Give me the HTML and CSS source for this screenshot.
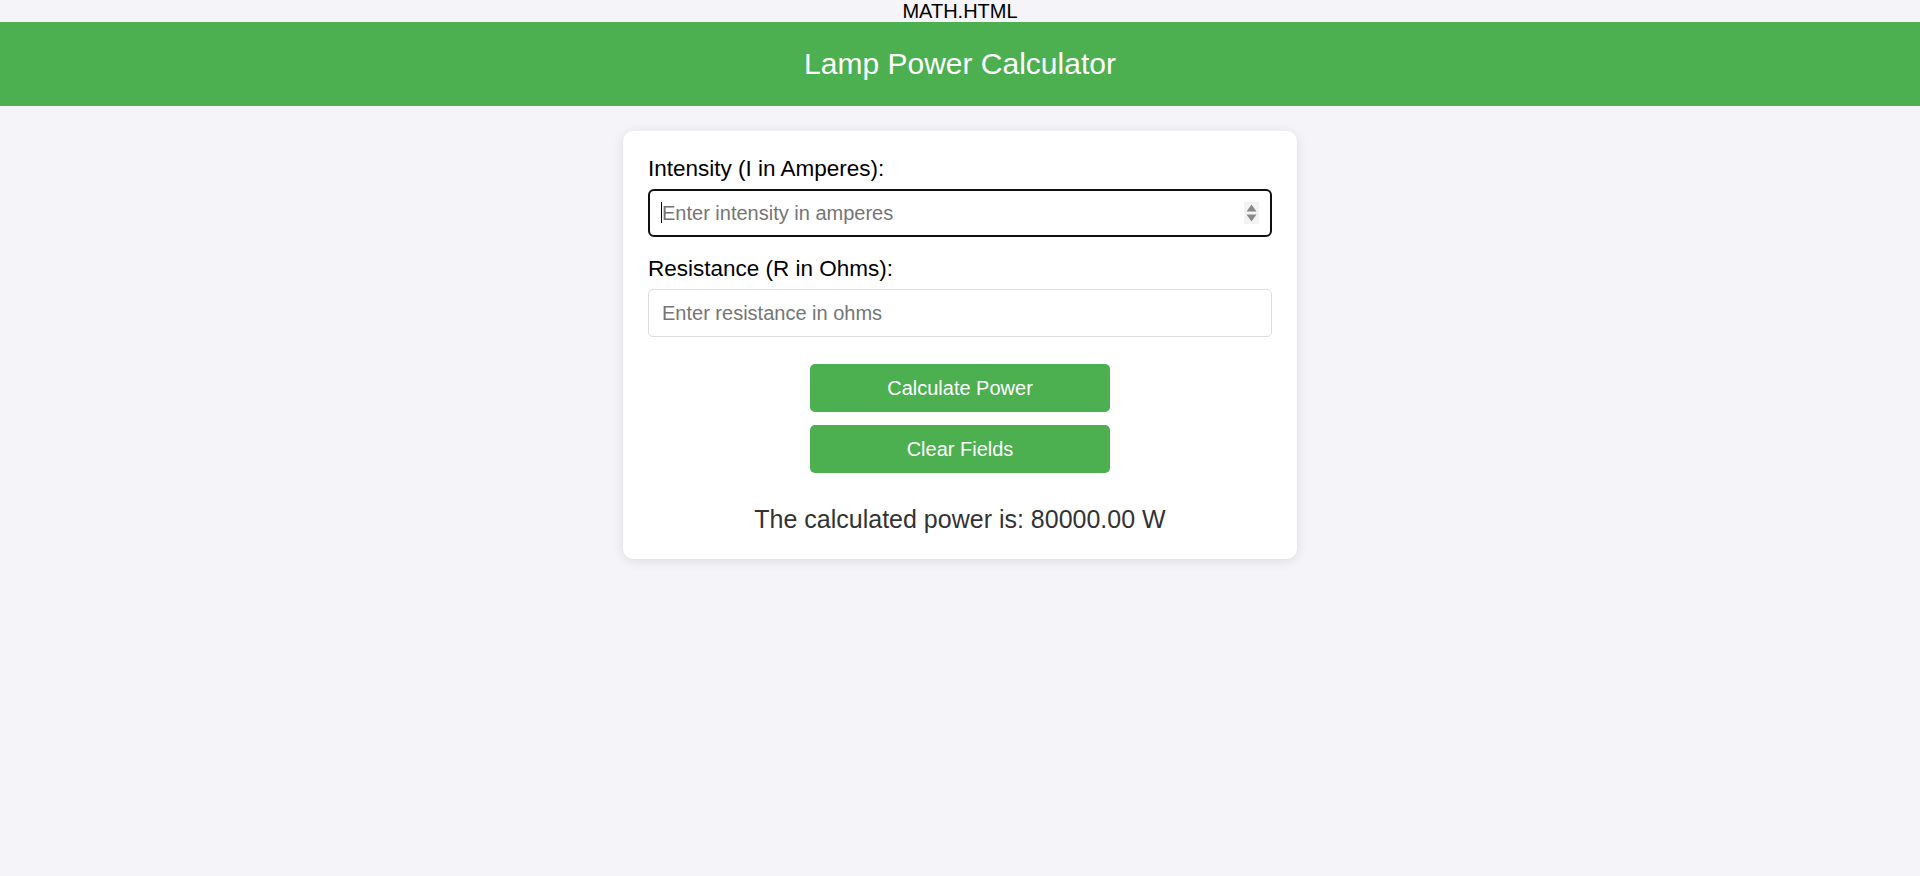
FILE: index.html
```html
<!DOCTYPE html>
<html lang="en">
<head>
<meta charset="utf-8">
<title>MATH.HTML</title>
<link rel="stylesheet" href="styles.css">
</head>
<body>
<div class="topline">MATH.HTML</div>
<header class="header">
  <h1 class="title">Lamp Power Calculator</h1>
</header>
<main class="main">
  <section class="card">
    <label class="label" for="intensity">Intensity (I in Amperes):</label>
    <div class="field">
      <input class="input input-focused" id="intensity" type="number" placeholder="Enter intensity in amperes">
      <span class="caret"></span>
      <svg class="spinner" width="15" height="22" viewBox="0 0 15 22" aria-hidden="true">
        <rect x="0" y="0" width="15" height="22" fill="#f3f3f3"/>
        <polygon points="7.5,2.5 12.5,9.5 2.5,9.5" fill="#8a8a8a"/>
        <polygon points="2.5,12.5 12.5,12.5 7.5,19.5" fill="#8a8a8a"/>
      </svg>
    </div>
    <label class="label" for="resistance">Resistance (R in Ohms):</label>
    <div class="field field-last">
      <input class="input" id="resistance" type="number" placeholder="Enter resistance in ohms">
    </div>
    <div class="actions">
      <button class="btn" type="button">Calculate Power</button>
      <button class="btn" type="button">Clear Fields</button>
    </div>
    <p class="result">The calculated power is: 80000.00 W</p>
  </section>
</main>
</body>
</html>
```

FILE: styles.css
```css
* {
  box-sizing: border-box;
}

html, body {
  margin: 0;
  padding: 0;
}

body {
  background: #f4f4f9;
  font-family: "Liberation Sans", Arial, sans-serif;
  color: #000;
  min-height: 876px;
}

.topline {
  height: 22px;
  line-height: 22px;
  font-size: 20px;
  text-align: center;
  color: #000;
}

.header {
  background: #4caf50;
  height: 84px;
  display: flex;
  align-items: center;
  justify-content: center;
}

.title {
  margin: 0;
  font-size: 30px;
  font-weight: normal;
  color: #fff;
  line-height: 34px;
}

.main {
  display: flex;
  justify-content: center;
  padding-top: 25px;
}

.card {
  width: 674px;
  padding: 25px;
  background: #fff;
  border-radius: 10px;
  box-shadow: 0 2px 12px rgba(0, 0, 0, 0.1);
}

.label {
  display: block;
  font-size: 22.5px;
  line-height: 26px;
  margin-bottom: 7px;
  color: #000;
}

.field {
  position: relative;
  margin-bottom: 19px;
}

.field-last {
  margin-bottom: 27px;
}

.input {
  display: block;
  width: 100%;
  height: 48px;
  padding: 0 13px;
  border: 1px solid #dcdcdc;
  border-radius: 5px;
  font-family: "Liberation Sans", Arial, sans-serif;
  font-size: 20px;
  color: #000;
  background: #fff;
  outline: none;
  -moz-appearance: textfield;
}

.input::-webkit-outer-spin-button,
.input::-webkit-inner-spin-button {
  -webkit-appearance: none;
  margin: 0;
}

.input::placeholder {
  color: #757575;
}

.input-focused {
  border: 2px solid #101010;
  border-radius: 6px;
  padding: 0 12px;
}

.caret {
  position: absolute;
  left: 13px;
  top: 13px;
  width: 1px;
  height: 21px;
  background: #000;
}

.spinner {
  position: absolute;
  right: 13px;
  top: 13px;
  display: block;
}

.actions {
  display: flex;
  flex-direction: column;
  align-items: center;
  gap: 13px;
}

.btn {
  width: 300px;
  height: 48px;
  border: none;
  border-radius: 5px;
  background: #4caf50;
  color: #fff;
  font-family: "Liberation Sans", Arial, sans-serif;
  font-size: 20px;
  cursor: pointer;
}

.result {
  margin: 32px 0 0;
  font-size: 25px;
  line-height: 29px;
  text-align: center;
  color: #333;
}
```
